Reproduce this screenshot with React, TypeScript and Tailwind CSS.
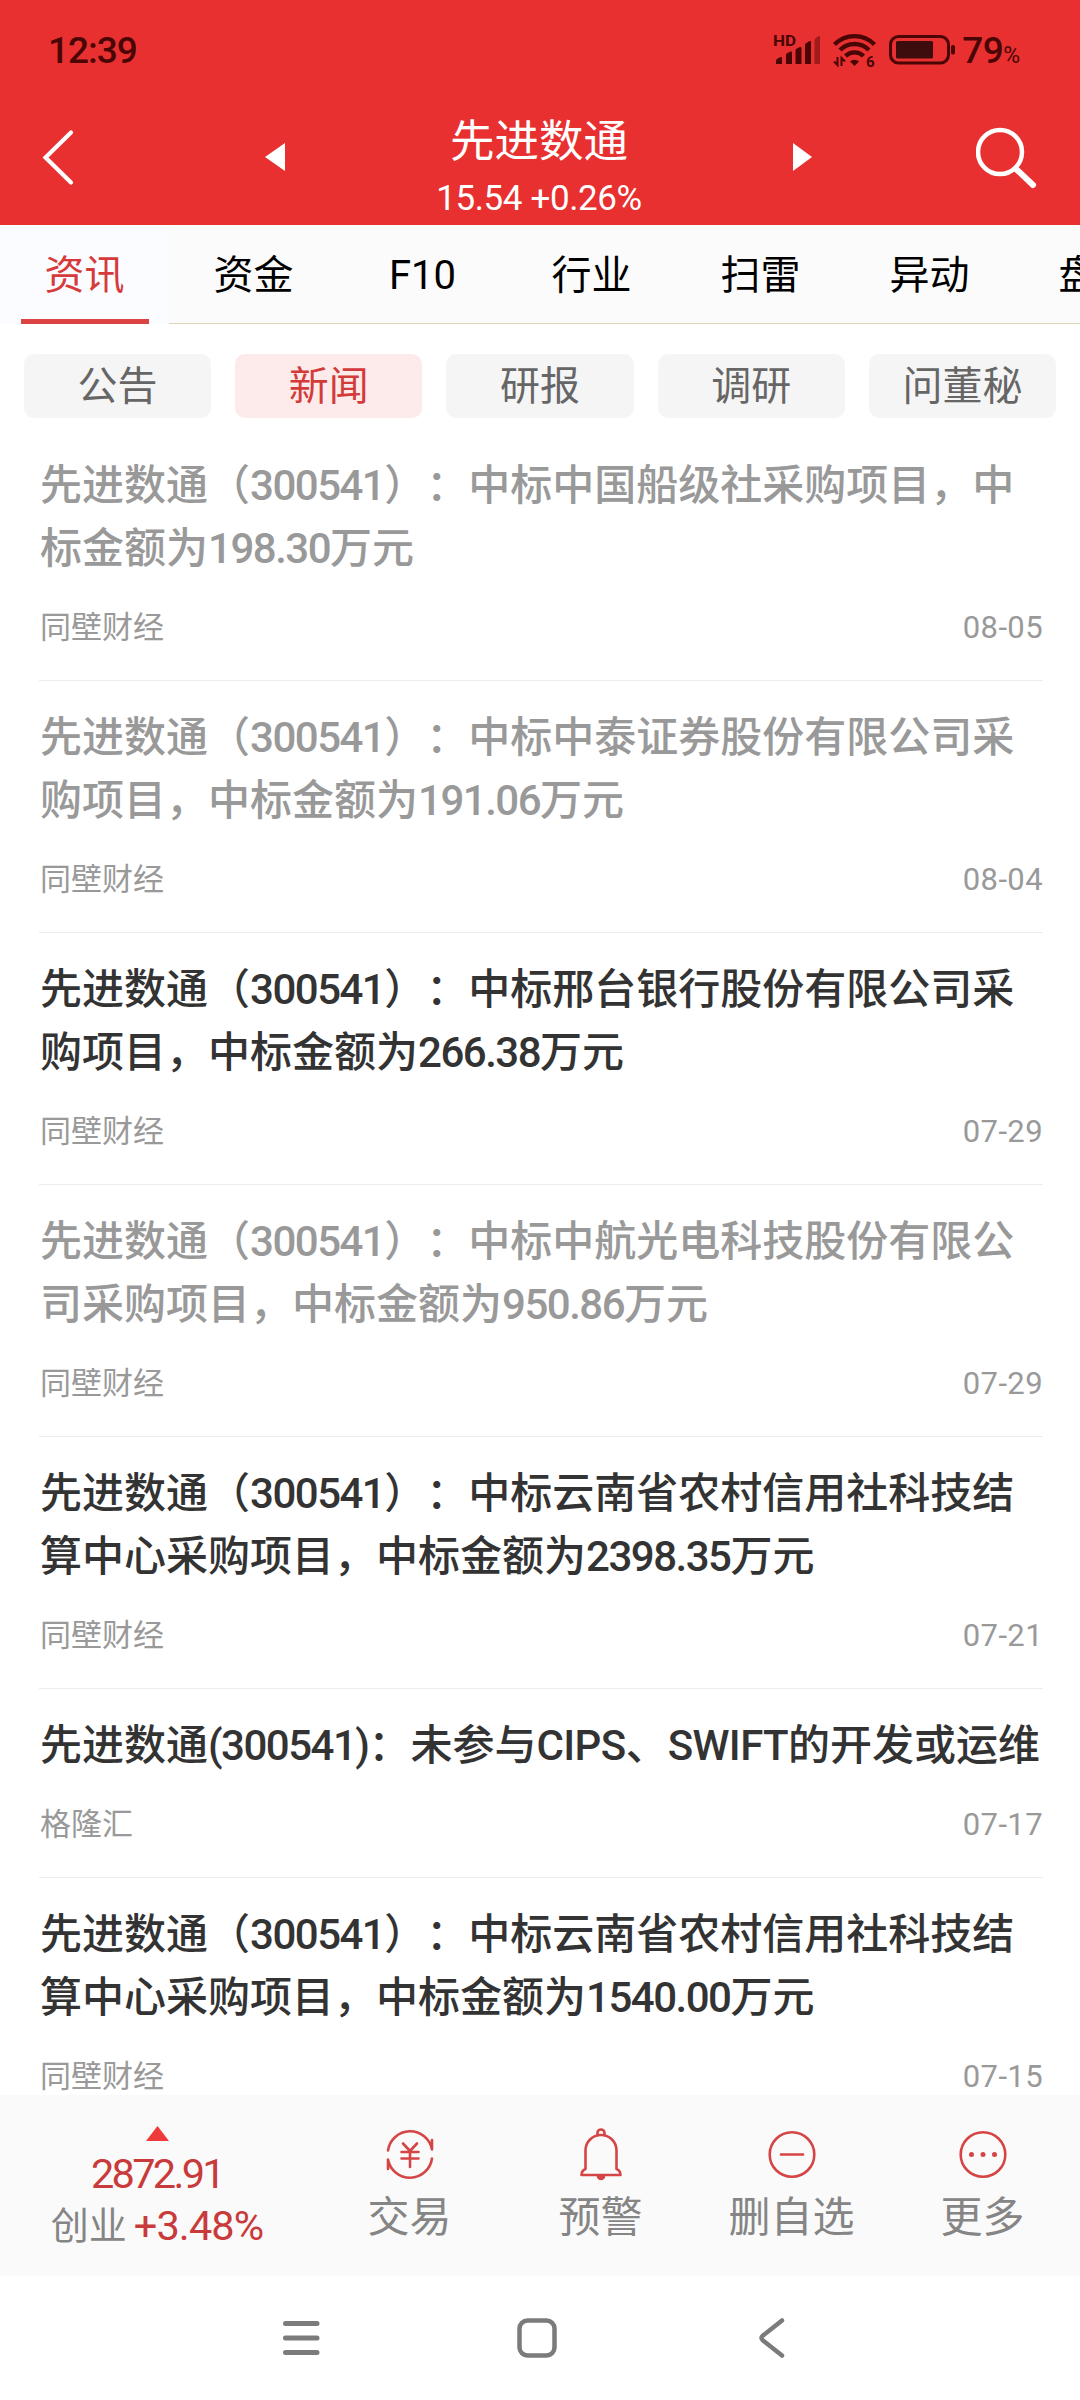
import React from "react";

interface NewsItem {
	title: string;
	source: string;
	date: string;
	read?: boolean;
}

const tabs = ["资讯", "资金", "F10", "行业", "扫雷", "异动", "盘口"];
const filters = ["公告", "新闻", "研报", "调研", "问董秘"];

const news: NewsItem[] = [
	{
		title: "先进数通（300541）：中标中国船级社采购项目，中标金额为198.30万元",
		source: "同壁财经",
		date: "08-05",
		read: true,
	},
	{
		title: "先进数通（300541）：中标中泰证券股份有限公司采购项目，中标金额为191.06万元",
		source: "同壁财经",
		date: "08-04",
		read: true,
	},
	{
		title: "先进数通（300541）：中标邢台银行股份有限公司采购项目，中标金额为266.38万元",
		source: "同壁财经",
		date: "07-29",
	},
	{
		title: "先进数通（300541）：中标中航光电科技股份有限公司采购项目，中标金额为950.86万元",
		source: "同壁财经",
		date: "07-29",
		read: true,
	},
	{
		title: "先进数通（300541）：中标云南省农村信用社科技结算中心采购项目，中标金额为2398.35万元",
		source: "同壁财经",
		date: "07-21",
	},
	{
		title: "先进数通(300541)：未参与CIPS、SWIFT的开发或运维",
		source: "格隆汇",
		date: "07-17",
	},
	{
		title: "先进数通（300541）：中标云南省农村信用社科技结算中心采购项目，中标金额为1540.00万元",
		source: "同壁财经",
		date: "07-15",
	},
];

// latin runs are set a little tighter than the chinese text around them
const Title = ({ text }: { text: string }) => (
	<>
		{text.split(/([0-9.()]+|[A-Z]+)/).map((part, i) =>
			i % 2 ? (
				<span key={i} className={/[A-Z]/.test(part) ? "tracking-[-0.6px]" : "tracking-[-1.5px]"}>
					{part}
				</span>
			) : (
				part
			),
		)}
	</>
);

const StatusBar = () => (
	<div className="flex h-[94px] items-center justify-between pt-[6px] pr-[60px] pl-[48px] text-[#4a0505]">
		<div className="text-[37px] leading-none font-medium tracking-[-1px]">12:39</div>
		<div className="flex items-center">
			<svg className="h-[36px] w-[48px] overflow-visible" viewBox="0 0 48 36">
				<text x="-1" y="13.500" fontSize="15" fontWeight="700" fill="currentColor" textLength="23" lengthAdjust="spacingAndGlyphs">
					HD
				</text>
				<g fill="currentColor">
					<path d="M2 32v-3q0-1.500 1.500-2.500l3-1.500q1.500-.5 1.500 1v6z" />
					<path d="M12 32V23q0-1.500 1.500-2l3-1.500q1.500-.5 1.500 1V32z" />
					<path d="M21.500 32V18.500q0-1.500 1.500-2l3-1.500q1.500-.5 1.500 1v16z" />
					<path d="M31 32V13q0-1.500 1.500-2l3-2q1.500-.5 1.500 1v22z" />
					<path d="M40.500 32V8.500q0-1.500 1.500-2.500l2.500-2q1.500-.5 1.500 1v27z" opacity="0.45" />
				</g>
			</svg>
			<svg className="ml-[11px] h-[36px] w-[44px] overflow-visible" viewBox="0 0 44 36">
				<g fill="none" stroke="currentColor" strokeWidth="4.400">
					<path d="M1.500 12.500a28 28 0 0 1 40 0" />
					<path d="M7 18a20.500 20.500 0 0 1 29 0" />
					<path d="M12.500 24a13 13 0 0 1 18 0" />
				</g>
				<path d="M17 29.500a6.500 6.500 0 0 1 9 0L21.500 34z" fill="currentColor" />
				<path d="M4.500 25v8L1 29.500M8.500 34v-8l3.500 3.500" fill="none" stroke="currentColor" strokeWidth="2" />
				<text x="33" y="34.500" fontSize="15" fontWeight="700" fill="currentColor">
					6
				</text>
			</svg>
			<svg className="ml-[12px] h-[36px] w-[68px]" viewBox="0 0 68 36">
				<rect x="1.500" y="4.500" width="58" height="26.500" rx="8" fill="none" stroke="currentColor" strokeWidth="3" />
				<rect x="7" y="9" width="37" height="17.500" rx="1.500" fill="#3d0c0c" />
				<rect x="62" y="13" width="4" height="9.500" rx="1.800" fill="currentColor" />
			</svg>
			<div className="ml-[5px] text-[37px] leading-none font-medium tracking-[-0.600px]">79</div>
			<div className="pt-[11px] text-[23px] leading-none">%</div>
		</div>
	</div>
);

const Header = () => (
	<header className="h-[225px] shrink-0 bg-[#e83030] text-white">
		<StatusBar />
		<div className="flex h-[131px] items-start pl-[41px]">
			<svg className="mt-[34px] h-[58px] w-[34px]" viewBox="0 0 34 58" fill="none" stroke="currentColor" strokeWidth="4.200" strokeLinecap="round">
				<path d="M30 4.500 4.500 29.500 30 54.500" />
			</svg>
			<svg className="mt-[49px] ml-[190px] h-[28px] w-[20px]" viewBox="0 0 20 28" fill="currentColor">
				<path d="M20 0v28L0 14z" />
			</svg>
			<div className="flex w-[508px] flex-col items-center pt-[22px]">
				<div className="text-[44.500px] leading-[52px]">先进数通</div>
				<div className="mt-[11px] text-[35px] leading-[40px] tracking-[-0.400px]">15.54 +0.26%</div>
			</div>
			<svg className="mt-[49px] h-[28px] w-[20px]" viewBox="0 0 20 28" fill="currentColor">
				<path d="M0 0v28l19-14z" />
			</svg>
			<svg className="mt-[33px] ml-[163px] h-[62px] w-[62px]" viewBox="0 0 62 62" fill="none" stroke="currentColor">
				<circle cx="24" cy="25" r="22" strokeWidth="4.500" />
				<path d="M40 42 57 58" strokeWidth="6" strokeLinecap="round" />
			</svg>
		</div>
	</header>
);

const TabBar = () => (
	<nav className="flex h-[99px] shrink-0 overflow-hidden bg-[#fbfbfb] text-[40px]">
		{tabs.map((tab, i) =>
			i === 0 ? (
				<div key={tab} className="flex w-[169px] shrink-0 flex-col items-center bg-[#fafcff] text-[#d63a3a]">
					<div className="h-[94px] leading-[101px]">{tab}</div>
					<div className="h-[5px] w-[128px] bg-[#dd4343]" />
				</div>
			) : (
				<div
					key={tab}
					className="w-[169px] shrink-0 border-b border-[#e0d4b8] text-center leading-[101px] text-black"
				>
					{tab}
				</div>
			),
		)}
	</nav>
);

const Filters = () => (
	<div className="grid shrink-0 grid-cols-5 gap-[24px] px-[24px] pt-[30px] pb-[11px]">
		{filters.map((name) => (
			<div
				key={name}
				className={`h-[64px] rounded-[10px] text-center text-[40px] leading-[65px] ${
					name === "新闻" ? "bg-[#fdeaea] text-[#d33a3a]" : "bg-[#f5f5f5] text-[#666666]"
				}`}
			>
				{name}
			</div>
		))}
	</div>
);

const NewsRow = ({ item }: { item: NewsItem }) => (
	<li className="shrink-0 border-b border-[#ececec] pt-[25px] pb-[29px]">
		<div
			className={`pl-px text-[42px] leading-[63px] font-medium break-all [text-spacing-trim:space-all] ${
				item.read ? "text-[#999999]" : "text-[#333333]"
			}`}
		>
			<Title text={item.title} />
		</div>
		<div className="mt-[25px] flex h-[46px] items-center justify-between pl-px text-[31px] text-[#999999]">
			<span>{item.source}</span>
			<span className="tracking-[0.4px]">{item.date}</span>
		</div>
	</li>
);

const actions = [
	{
		label: "交易",
		icon: (
			<>
				<path d="M4 22.500a22.300 22.300 0 0 1 44-1v-9.500" />
				<path d="M48 30.500a22.300 22.300 0 0 1-44 1v9.500" />
				<path d="m19 15.500 7 7.500 7-7.500M17.500 24h17M17.500 30.500h17M26 23v16" />
			</>
		),
	},
	{
		label: "预警",
		icon: (
			<>
				<path d="M10.500 41V22.500a15.500 15.500 0 0 1 31 0V41q4 1.500 4 6h-39q0-4.500 4-6z" />
				<path d="M22.500 7V5a3.500 3.500 0 0 1 7 0v2" />
				<path d="M23 48h6a3 3 0 0 1-6 0z" fill="currentColor" />
			</>
		),
	},
	{
		label: "删自选",
		icon: (
			<>
				<circle cx="26" cy="26.500" r="22.300" />
				<path d="M15 26.500h22" />
			</>
		),
	},
	{
		label: "更多",
		icon: (
			<>
				<circle cx="26" cy="26.500" r="22.300" />
				<path d="M14.500 26.500h.01M26 26.500h.01M37.500 26.500h.01" strokeWidth="5" />
			</>
		),
	},
];

const BottomBar = () => (
	<div className="flex h-[181px] shrink-0 bg-[#fafafa]">
		<div className="flex w-[314px] flex-col items-center pt-[31px]">
			<svg className="h-[15px] w-[23px]" viewBox="0 0 23 15" fill="#ee3a3a">
				<path d="M11.500 0 23 15H0z" />
			</svg>
			<div className="mt-[10px] text-[41.500px] leading-[46px] tracking-[-2.7px] text-[#c93a3a]">2872.91</div>
			<div className="mt-[6px] flex items-center leading-[46px]">
				<span className="text-[38px] text-[#858585]">创业</span>
				<span className="ml-[7px] text-[41.500px] tracking-[-0.900px] text-[#c93a3a]">+3.48%</span>
			</div>
		</div>
		{actions.map((action) => (
			<div key={action.label} className="flex w-[191px] flex-col items-center pt-[33px]">
				<svg
					className="h-[54px] w-[52px] text-[#d64545]"
					viewBox="0 0 52 54"
					fill="none"
					stroke="currentColor"
					strokeWidth="2.600"
					strokeLinecap="round"
					strokeLinejoin="round"
				>
					{action.icon}
				</svg>
				<div className="mt-[8px] text-[42px] leading-[56px] text-[#858585]">{action.label}</div>
			</div>
		))}
	</div>
);

const SystemNav = () => (
	<div className="flex h-[124px] shrink-0 items-start bg-white pt-[40px] pl-[281px] text-[#7b7b7b]">
		<svg className="h-[44px] w-[40px]" viewBox="0 0 40 44" fill="none" stroke="currentColor" strokeWidth="5" strokeLinecap="round">
			<path d="M4.500 7.500h31.500M4.500 22h31.500M4.500 36.500h31.500" />
		</svg>
		<svg className="ml-[194px] h-[44px] w-[44px]" viewBox="0 0 44 44" fill="none" stroke="currentColor" strokeWidth="4.500">
			<rect x="4.500" y="4.500" width="35" height="35" rx="8" />
		</svg>
		<svg className="ml-[198px] h-[44px] w-[30px]" viewBox="0 0 30 44" fill="none" stroke="currentColor" strokeWidth="4.500" strokeLinecap="round" strokeLinejoin="round">
			<path d="M25 4.500 6 19.500q-3 2.500 0 5L25 39.500" />
		</svg>
	</div>
);

const App = () => {
	return (
		<div className="flex h-[2400px] w-[1080px] flex-col overflow-hidden bg-white font-['Roboto','Noto_Sans_CJK_SC',sans-serif]">
			<Header />
			<TabBar />
			<Filters />
			<ul className="flex min-h-0 flex-1 flex-col overflow-hidden pr-[37px] pl-[39px]">
				{news.map((item) => (
					<NewsRow key={item.title} item={item} />
				))}
			</ul>
			<BottomBar />
			<SystemNav />
		</div>
	);
};

export default App;
